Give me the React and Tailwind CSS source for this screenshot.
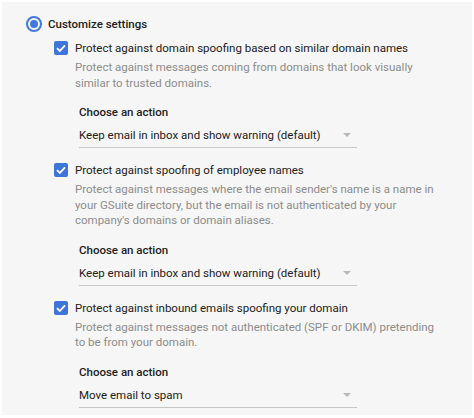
const groups = [
  {
    title: "Protect against domain spoofing based on similar domain names",
    desc: ["Protect against messages coming from domains that look visually", "similar to trusted domains."],
    action: "Keep email in inbox and show warning (default)",
  },
  {
    title: "Protect against spoofing of employee names",
    desc: [
      "Protect against messages where the email sender's name is a name in",
      "your GSuite directory, but the email is not authenticated by your",
      "company's domains or domain aliases.",
    ],
    action: "Keep email in inbox and show warning (default)",
  },
  {
    title: "Protect against inbound emails spoofing your domain",
    desc: ["Protect against messages not authenticated (SPF or DKIM) pretending", "to be from your domain."],
    action: "Move email to spam",
  },
];

function Checkbox() {
  return (
    <span className="flex h-[14px] w-[14px] shrink-0 items-center justify-center rounded-[2px] bg-[#3f74d8]">
      <svg viewBox="0 0 14 14" className="h-[14px] w-[14px]">
        <path d="M3 7.2 L5.8 10 L11 4.3" fill="none" stroke="white" strokeWidth="1.8" />
      </svg>
    </span>
  );
}

function Group({ title, desc, action, first }) {
  return (
    <div className={first ? "mt-[4px]" : "mt-[12px]"}>
      <div className="flex items-center gap-[7px] pl-[52px] h-[20px]">
        <Checkbox />
        <span className="text-[#212121]">{title}</span>
      </div>
      <div className="mt-[2px] pl-[73px] text-[#8c8c8c] leading-[15.5px]">
        {desc.map((d) => (
          <div key={d}>{d}</div>
        ))}
      </div>
      <div className="mt-[11px] pl-[77px]">
        <div className="h-[20px] leading-[20px] font-medium text-[#212121]">Choose an action</div>
        <div className="mt-[1px] flex h-[25px] w-[278px] items-center justify-between border-b border-[#c8c8c8] pr-[6px]">
          <span className="text-[#212121]">{action}</span>
          <svg viewBox="0 0 8 4" className="h-[4px] w-[8px]">
            <path d="M0 0 L8 0 L4 4 Z" fill="#b8b8b8" />
          </svg>
        </div>
      </div>
    </div>
  );
}

export default function App() {
  return (
    <div className="h-[418px] w-[474px] bg-white p-[2px]" style={{ fontFamily: "Roboto, 'Noto Sans', sans-serif" }}>
      <div className="h-[413px] bg-[#f6f6f6] pt-[12px] text-[11.5px] leading-[20px]">
        <div className="flex h-[20px] items-center gap-[6px] pl-[24px]">
          <span className="flex h-[16px] w-[16px] items-center justify-center rounded-full border-[2px] border-[#4279dc]">
            <span className="h-[8px] w-[8px] rounded-full bg-[#4279dc]" />
          </span>
          <span className="font-medium text-[#212121]">Customize settings</span>
        </div>
        {groups.map((g, i) => (
          <Group key={i} {...g} first={i === 0} />
        ))}
      </div>
    </div>
  );
}
